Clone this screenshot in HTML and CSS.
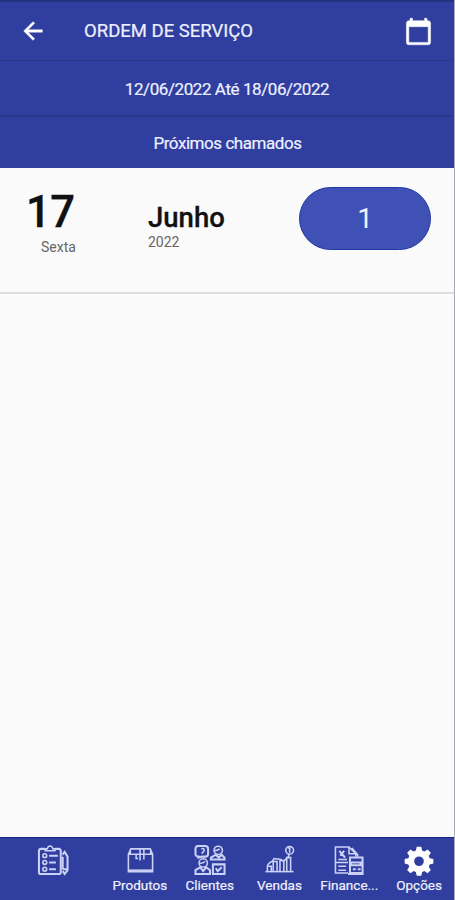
FILE: index.html
```html
<!DOCTYPE html>
<html lang="pt-BR">
<head>
<meta charset="utf-8">
<title>Ordem de Serviço</title>
<link rel="stylesheet" href="styles.css">
</head>
<body>
<div class="screen">
  <header class="appbar">
    <svg class="back" viewBox="0 0 24 24"><path d="M20 11H7.830l5.590-5.590L12 4l-8 8 8 8 1.410-1.410L7.830 13H20z"/></svg>
    <h1 class="title">ORDEM DE SERVIÇO</h1>
    <svg class="calendar" viewBox="0 0 24 24"><path d="M20 3h-1V1h-2v2H7V1H5v2H4c-1.100 0-2 .9-2 2v16c0 1.100.9 2 2 2h16c1.100 0 2-.9 2-2V5c0-1.100-.9-2-2-2zm0 18H4V8h16v13z"/></svg>
  </header>
  <div class="period"><span>12/06/2022 Até 18/06/2022</span></div>
  <div class="section"><span>Próximos chamados</span></div>
  <main class="content">
    <article class="row">
      <div class="day"><strong>17</strong><span>Sexta</span></div>
      <div class="month"><strong>Junho</strong><span>2022</span></div>
      <div class="count">1</div>
    </article>
  </main>
  <nav class="tabs">
    <a class="tab">
      <svg viewBox="0 0 32 32"><path class="bold" d="M8 4H3.500Q1.500 4 1.500 6v22q0 2 2 2H22q2 0 2-2V6q0-2-2-2h-4"/><path d="M8 6V4h2q1-3 3-3t3 3h2v2z"/><path class="bold" d="M12 11h9M12 18h7M12 25h7"/><circle cx="7.500" cy="11" r="2"/><circle cx="7.500" cy="18" r="2"/><circle cx="7.500" cy="25" r="2"/><path class="bold" d="M26 10l2-3 3 5v14l-3 4-2-3M26 12v13M26 25h5"/></svg>
    </a>
    <a class="tab">
      <svg viewBox="0 0 32 32"><path d="M4 9.500L6.500 4h20L29 9.500v18H4zM4 9.500h25M12 9.500V14h2M16 4v12M20 4v11M6 4v5M27 4v5"/><path d="M4 26h25"/></svg>
      <span>Produtos</span>
    </a>
    <a class="tab">
      <svg viewBox="0 0 32 32"><path class="bold" d="M4 1h7q3 0 3 3v5q0 3-3 3H8l-4 1v-1q-3 0-3-3V4q0-3 3-3M17 15v-2l5-3 3 3 3-3 3 3v2zM1 30v-4l5-3 3 4 3-4 4 3v4zM19 20h12v10H19zM22 24l2 3 4-4"/><path d="M7 4q3-1 3 1T8 8v1M20 6q4 0 6-2M5 19q4 0 6-2"/><circle cx="24.500" cy="5.500" r="4.300"/><circle cx="9" cy="18.500" r="4.300"/></svg>
      <span>Clientes</span>
    </a>
    <a class="tab">
      <svg viewBox="0 0 32 32"><path d="M2 27.500h29"/><path d="M4 27v-5h4v5M10 27V17h4v10M17 27V16h4v11M24 27V13h4v14M4 21q3-4 5-4l2-3 7 1 3 2 4-5M26 9v5M27 3v5M25 3h3"/><circle cx="27" cy="5.500" r="4"/></svg>
      <span>Vendas</span>
    </a>
    <a class="tab">
      <svg viewBox="0 0 32 32"><path d="M15 29H2V2h14l7 7v3M16 2v7h7M2 18h13M5 22h8M5 26h8M5 15h9M19 3l6 7v2"/><path class="bold" d="M6 6l6 7M11 6l-4 5M16 13h15M17 14v15h13V14M18 18h10v3H18zM20 25h3M25 25h3M15 30h16"/></svg>
      <span>Finance...</span>
    </a>
    <a class="tab">
      <svg class="gear" viewBox="-1 -1 34 34"><path fill-rule="evenodd" d="M13.500 1h5l.9 4 2.500 1 3.500-2.200L29 7.400 26.700 11l1 2.500 4 .9v5l-4 .9-1 2.500 2.300 3.500-3.600 3.600-3.500-2.300-2.500 1-.9 4h-5l-.9-4-2.500-1-3.500 2.300L3 26.300l2.300-3.500-1-2.500-4-.9v-5l4-.9 1-2.500L3 7.400l3.600-3.600L10.100 6l2.500-1zM16 11.500a5.300 5.300 0 1 0 0 10.600 5.300 5.300 0 0 0 0-10.600z"/></svg>
      <span>Opções</span>
    </a>
  </nav>
</div>
</body>
</html>
```
FILE: styles.css
```css
* { box-sizing: border-box; }
body { margin: 0; font-family: Roboto, "Liberation Sans", sans-serif; background: #fafafa; }
.screen { height: 900px; width: 455px; display: flex; flex-direction: column; border-right: 1px solid #a9aab2; overflow: hidden; }
.appbar, .period, .section { background: #303f9f; color: #eef0ff; display: flex; align-items: center; flex: none; -webkit-text-stroke: .2px #eef0ff; }
.appbar { height: 61px; border-top: 2px solid #24317b; border-bottom: 1px solid #293789; padding: 0 21px 0 19px; }
.back { width: 28px; height: 28px; fill: #fff; stroke: #fff; stroke-width: .4; }
.title { margin: 0 auto 0 37px; font-size: 18.500px; font-weight: 400; line-height: 24px; }
.calendar { width: 29px; height: 29px; fill: #fff; stroke: #fff; stroke-width: .4; }
.period { height: 56px; padding-top: 2px; border-bottom: 2px solid #2a388c; justify-content: center; font-size: 17px; letter-spacing: -.42px; }
.section { height: 51px; padding-left: 1px; justify-content: center; font-size: 17px; letter-spacing: -.45px; }
.content { flex: 1; }
.row { height: 126px; display: flex; align-items: flex-start; border-bottom: 2px solid #dedede; color: #111; }
.day { width: 148px; padding: 18px 0 0 26px; display: flex; flex-direction: column; }
.day strong { font-size: 43.500px; line-height: 53px; font-weight: 500; letter-spacing: -.5px; -webkit-text-stroke: .4px #111; }
.day span { font-size: 14px; line-height: 16px; color: #666; padding-left: 15px; }
.month { width: 151px; padding-top: 34px; display: flex; flex-direction: column; }
.month strong { font-size: 27.500px; line-height: 32px; font-weight: 500; -webkit-text-stroke: .3px #111; }
.month span { font-size: 14px; line-height: 16px; color: #666; }
.count { width: 132px; height: 63px; margin-top: 19px; border-radius: 32px; background: #3f51b5; border: 1px solid #2239a5; color: #f0f1ff; font-size: 28px; display: flex; align-items: center; justify-content: center; }
.tabs { height: 63px; flex: none; background: #303f9f; border-top: 1px solid #1b2690; display: grid; grid-template-columns: 105px repeat(5, minmax(0, 1fr)); color: #f0f1ff; }
.tab { display: flex; flex-direction: column; align-items: center; padding-top: 7px; font-size: 13.500px; line-height: 16px; -webkit-text-stroke: .2px #f0f1ff; }
.tab svg { height: 31px; width: 32px; margin-bottom: 1px; fill: none; stroke: #ccd2f5; stroke-width: 1.600; }
.tab .bold { stroke-width: 2.100; }
.tab .gear { fill: #fff; stroke: none; }
```
